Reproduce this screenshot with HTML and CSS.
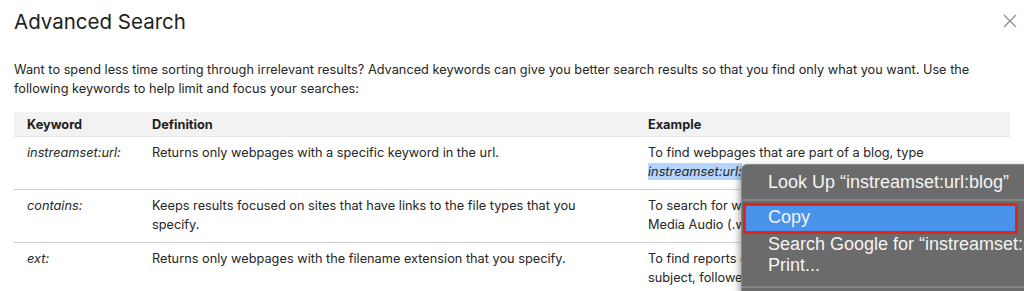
FILE: index.html
```html
<!DOCTYPE html>
<html lang="en">
<head>
<meta charset="utf-8">
<title>Advanced Search</title>
<link rel="stylesheet" href="styles.css">
</head>
<body>
<div class="dialog">
  <header class="dialog-head">
    <h1 class="title">Advanced Search</h1>
    <button class="close" aria-label="Close">
      <svg width="14" height="14" viewBox="0 0 14 14"><path d="M1 1 L13 13 M13 1 L1 13" stroke="#8a8a8a" stroke-width="1.2" fill="none"/></svg>
    </button>
  </header>
  <p class="intro">Want to spend less time sorting through irrelevant results? Advanced keywords can give you better search results so that you find only what you want. Use the following keywords to help limit and focus your searches:</p>
  <table class="kw-table">
    <colgroup><col class="c1"><col class="c2"><col class="c3"></colgroup>
    <thead>
      <tr><th>Keyword</th><th>Definition</th><th>Example</th></tr>
    </thead>
    <tbody>
      <tr>
        <td class="kw">instreamset:url:</td>
        <td>Returns only webpages with a specific keyword in the url.</td>
        <td>To find webpages that are part of a blog, type <span class="sel"><em>instreamset:url:</em></span><em>blog</em></td>
      </tr>
      <tr>
        <td class="kw">contains:</td>
        <td>Keeps results focused on sites that have links to the file types that you specify.</td>
        <td>To search for webpages that contain links to Windows Media Audio (.wma) files, type <em>contains:wma</em></td>
      </tr>
      <tr>
        <td class="kw">ext:</td>
        <td>Returns only webpages with the filename extension that you specify.</td>
        <td>To find reports created in Word (.docx) format, type the subject, followed by <em>ext:docx</em></td>
      </tr>
    </tbody>
  </table>
</div>
<div class="ctx-menu">
  <div class="item first">Look Up “instreamset:url:blog”</div>
  <div class="sep"></div>
  <div class="item active">Copy</div>
  <div class="item search">Search Google for “instreamset:url:blog”</div>
  <div class="item">Print...</div>
  <div class="sep bottom"></div>
</div>
</body>
</html>
```

FILE: styles.css
```css
html, body {
  margin: 0;
  padding: 0;
  background: #ffffff;
  overflow: hidden;
}
body {
  width: 1024px;
  height: 291px;
  position: relative;
  font-family: "Inter", "Liberation Sans", sans-serif;
  color: #262626;
}
.dialog {
  padding: 8px 14px 0 14px;
}
.dialog-head {
  display: flex;
  justify-content: space-between;
  align-items: flex-start;
}
.title {
  margin: 0;
  font-size: 20.5px;
  font-weight: 400;
  line-height: 28px;
  color: #1e1e1e;
}
.close {
  border: 0;
  background: none;
  padding: 0;
  margin: 6px -7px 0 0;
  width: 14px;
  height: 14px;
  display: flex;
}
.intro {
  margin: 24px 0 0 0;
  font-size: 12.75px;
  line-height: 19px;
}
.kw-table {
  margin-top: 14px;
  width: 996px;
  border-collapse: collapse;
  table-layout: fixed;
  font-size: 12.75px;
  line-height: 19px;
}
.c1 { width: 125px; }
.c2 { width: 496px; }
.c3 { width: 375px; }
.kw-table th {
  background: #f2f2f2;
  text-align: left;
  font-weight: 700;
  padding: 3px 13px 2px 13px;
  color: #1e1e1e;
  border-bottom: 1px solid #e6e6e6;
}
.kw-table td {
  padding: 6px 13px 8px 13px;
  vertical-align: top;
  border-bottom: 1px solid #d0d0d0;
  height: 38px;
}
.kw { font-style: italic; }
.sel {
  background: #b4d5fd;
  padding: 1px 0;
}
.ctx-menu {
  position: absolute;
  left: 741px;
  top: 164px;
  width: 330px;
  height: 160px;
  background: #6b6b6b;
  border: 1px solid #8a8a8a;
  border-radius: 6px;
  box-shadow: -2px 2px 6px rgba(0,0,0,0.35);
  padding-top: 4px;
  font-family: "Liberation Sans", "Helvetica", sans-serif;
  font-size: 18px;
  color: #f4f4f4;
}
.item {
  height: 23px;
  line-height: 23px;
  padding-left: 26px;
  white-space: nowrap;
}
.item.first {
  height: 26px;
  line-height: 26px;
}
.item.search {
  height: 20px;
  line-height: 20px;
}
.sep {
  height: 2px;
  background: #858585;
  margin: 4px 0 2px 0;
}
.item.active {
  background: #4a93ec;
  outline: 3px solid #e3241b;
  outline-offset: -3px;
  height: 31px;
  line-height: 29px;
  margin: 0 4px 0 1px;
  padding-left: 25px;
  width: 250px;
}
.sep.bottom {
  margin-top: 9px;
}
```
